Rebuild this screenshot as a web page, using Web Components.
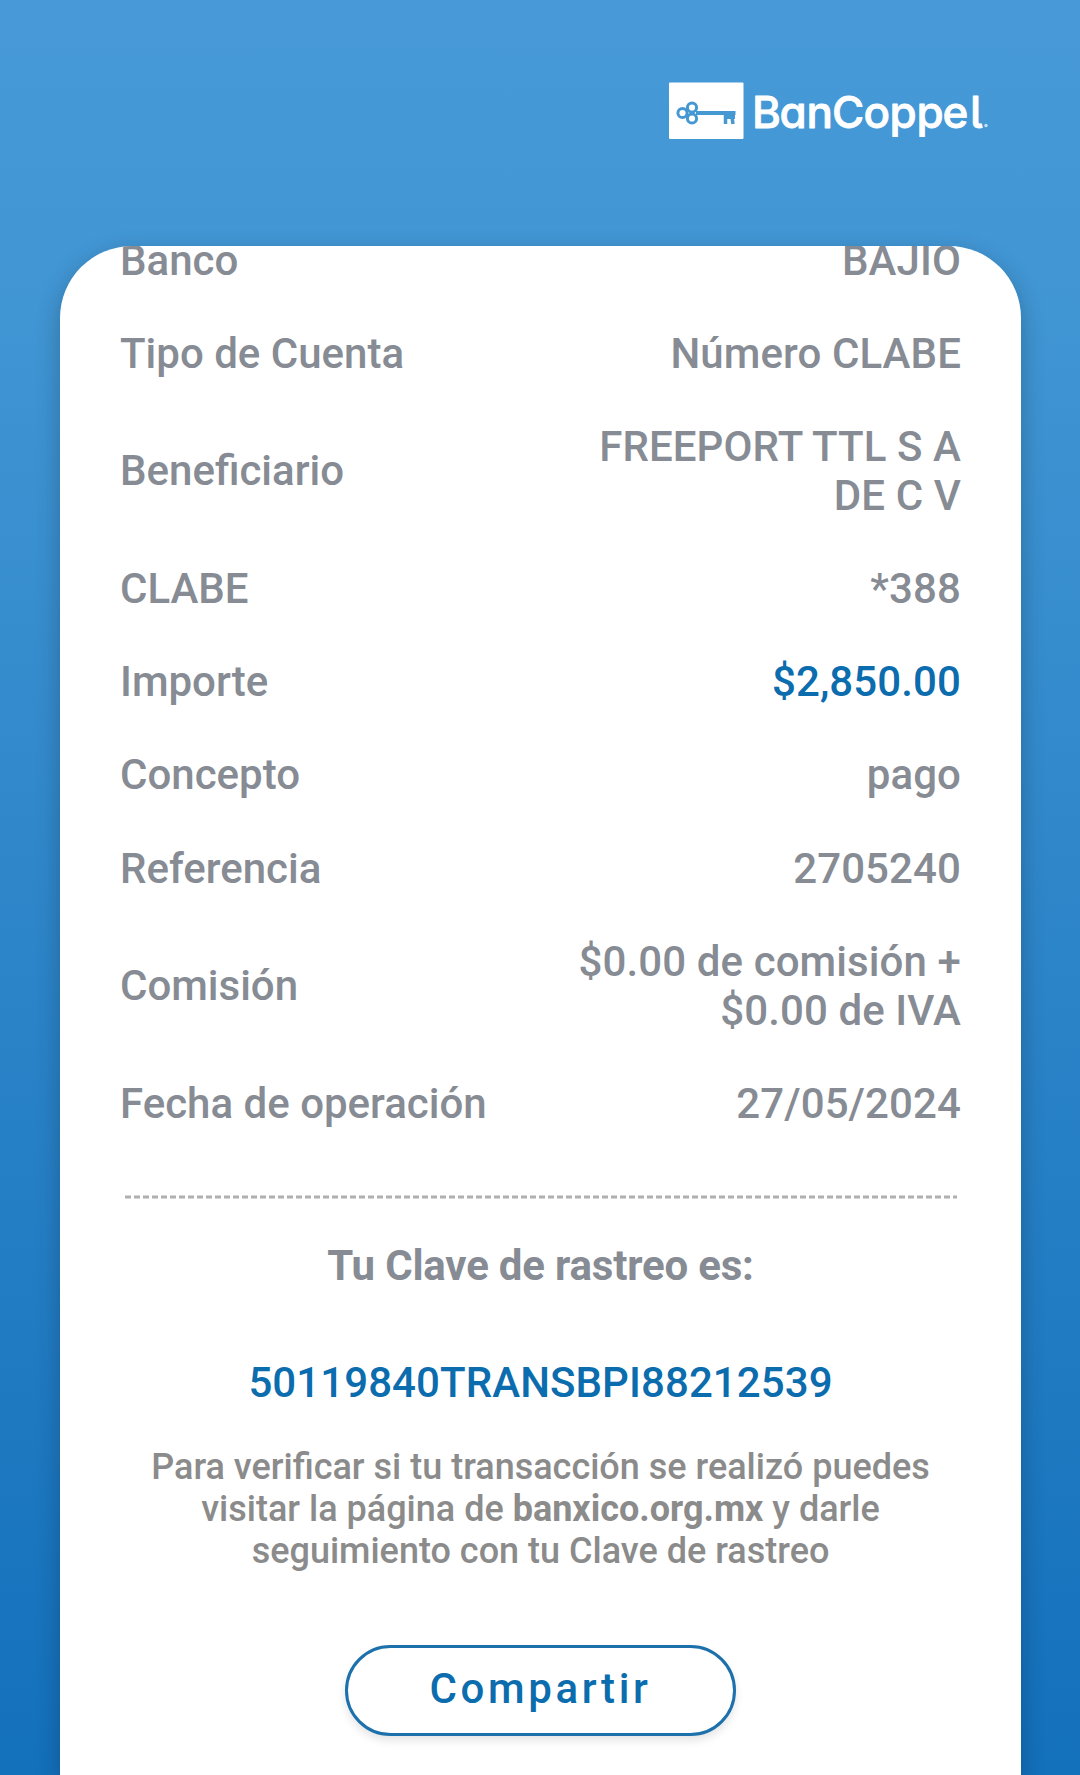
<!DOCTYPE html>
<html lang="es">
<head>
<meta charset="utf-8">
<title>BanCoppel</title>
<style>
  body {
    margin: 0;
    background: #fff;
    font-family: Roboto, "Liberation Sans", sans-serif;
  }
</style>
</head>
<body>
<transfer-receipt></transfer-receipt>

<script>
class BankLogo extends HTMLElement {
  constructor() {
    super();
    this.attachShadow({ mode: "open" });
  }

  static get styles() {
    return /* css */`
      :host {
        display: block;
        width: 322px;
        height: 68px;
      }

      svg {
        display: block;
        overflow: visible;
      }

      text {
        font-family: Inter, Lato, sans-serif;
        font-size: 44px;
        font-weight: 500;
        font-feature-settings: "cv11", "cv05";
        fill: #fff;
        stroke: #fff;
        stroke-width: .8;
        stroke-linejoin: round;
      }
    `;
  }

  connectedCallback() {
    this.shadowRoot.innerHTML = /* html */`
    <style>${BankLogo.styles}</style>
    <svg width="322" height="68" viewBox="0 0 322 68">
      <rect x="0" y="6.5" width="74.5" height="56.5" rx="1" fill="#fff"/>
      <g fill="none" stroke="#4698d3" stroke-width="3">
        <circle cx="13.5" cy="37" r="4.6"/>
        <circle cx="23" cy="31.5" r="4.6"/>
        <circle cx="23" cy="42.5" r="4.6"/>
        <path d="M27 37H66.5" stroke-width="4"/>
        <path d="M56.5 38V48M62.5 38L64 48" stroke-width="3.5"/>
        <path d="M55 41H66" stroke-width="4"/>
      </g>
      <text x="83 110.5 137.5 163 194.5 220.5 247.5 273.5 301" y="51.5">BanCoppel</text>
      <circle cx="317" cy="49.5" r="1.7" fill="#c5e3f7"/>
    </svg>
    `;
  }
}

class ReceiptRow extends HTMLElement {
  constructor() {
    super();
    this.attachShadow({ mode: "open" });
  }

  static get styles() {
    return /* css */`
      :host {
        display: flex;
        justify-content: space-between;
        align-items: center;
        padding: 21.98px 0;
        font-size: 42px;
        font-weight: 500;
        line-height: 49.2px;
        color: #868b94;
      }

      .value {
        max-width: 400px;
        letter-spacing: .1px;
        text-align: right;
      }

      :host([highlight]) .value {
        color: #0b6cae;
      }
    `;
  }

  connectedCallback() {
    this.shadowRoot.innerHTML = /* html */`
    <style>${ReceiptRow.styles}</style>
    <span class="label">${this.getAttribute("label")}</span>
    <span class="value"><slot></slot></span>
    `;
  }
}

class TrackingKey extends HTMLElement {
  constructor() {
    super();
    this.attachShadow({ mode: "open" });
  }

  static get styles() {
    return /* css */`
      :host {
        display: flex;
        flex-direction: column;
        align-items: center;
        text-align: center;
        font-weight: 500;
      }

      svg {
        display: block;
        width: 832px;
        height: 4px;
      }

      h2 {
        margin: 42px 0 0;
        font-size: 42px;
        line-height: 49px;
        font-weight: 700;
        letter-spacing: -.2px;
        color: #868b94;
      }

      .key {
        margin-top: 68px;
        font-size: 42px;
        line-height: 49px;
        letter-spacing: .08px;
        color: #0b6cae;
      }

      p {
        margin: 38.4px 0 0;
        font-size: 36px;
        line-height: 42.2px;
        color: #8b8b8b;
      }
    `;
  }

  connectedCallback() {
    this.shadowRoot.innerHTML = /* html */`
    <style>${TrackingKey.styles}</style>
    <svg viewBox="0 0 832 4">
      <path d="M0 2H832" stroke="#b0b0b0" stroke-width="3" stroke-dasharray="6 3"/>
    </svg>
    <h2>Tu Clave de rastreo es:</h2>
    <div class="key">${this.getAttribute("value")}</div>
    <p><slot></slot></p>
    `;
  }
}

class PillButton extends HTMLElement {
  constructor() {
    super();
    this.attachShadow({ mode: "open" });
  }

  static get styles() {
    return /* css */`
      :host {
        display: block;
      }

      button {
        display: block;
        box-sizing: border-box;
        width: 391px;
        height: 91px;
        padding: 0 0 3px;
        border: 3px solid #1c70ab;
        border-radius: 46px;
        background: #fff;
        box-shadow: 0 5px 9px rgba(0, 0, 0, .1);
        color: #0b6cae;
        font: 500 42px Roboto, sans-serif;
        letter-spacing: 3.6px;
      }
    `;
  }

  connectedCallback() {
    this.shadowRoot.innerHTML = /* html */`
    <style>${PillButton.styles}</style>
    <button type="button"><slot></slot></button>
    `;
  }
}

class TransferReceipt extends HTMLElement {
  constructor() {
    super();
    this.attachShadow({ mode: "open" });
  }

  static get styles() {
    return /* css */`
      :host {
        display: flex;
        flex-direction: column;
        box-sizing: border-box;
        width: 1080px;
        height: 1775px;
        overflow: hidden;
        background: linear-gradient(#479ad7, #4095d3 18%, #1370bb);
      }

      header {
        display: flex;
        justify-content: flex-end;
        flex: none;
        box-sizing: border-box;
        height: 245.5px;
        padding: 76px 89px 0 0;
      }

      main {
        display: flex;
        flex-direction: column;
        flex: 1;
        min-height: 0;
        box-sizing: border-box;
        width: 961px;
        margin-left: 60px;
        padding: 0 60px;
        overflow: hidden;
        border-radius: 72px 72px 0 0;
        background: #fff;
        box-shadow: 0 8px 24px rgba(0, 0, 0, .24);
      }

      /* the list is scrolled, so its first row starts above the card */
      .rows {
        margin-top: -31.9px;
      }

      tracking-key {
        margin-top: 45px;
      }

      pill-button {
        align-self: center;
        margin-top: 72.6px;
      }
    `;
  }

  connectedCallback() {
    this.shadowRoot.innerHTML = /* html */`
    <style>${TransferReceipt.styles}</style>
    <header><bank-logo></bank-logo></header>
    <main>
      <div class="rows">
        <receipt-row label="Banco">BAJIO</receipt-row>
        <receipt-row label="Tipo de Cuenta">Número CLABE</receipt-row>
        <receipt-row label="Beneficiario">FREEPORT TTL S A<br>DE C V</receipt-row>
        <receipt-row label="CLABE">*388</receipt-row>
        <receipt-row label="Importe" highlight>$2,850.00</receipt-row>
        <receipt-row label="Concepto">pago</receipt-row>
        <receipt-row label="Referencia">2705240</receipt-row>
        <receipt-row label="Comisión">$0.00 de comisión +<br>$0.00 de IVA</receipt-row>
        <receipt-row label="Fecha de operación">27/05/2024</receipt-row>
      </div>
      <tracking-key value="50119840TRANSBPI88212539">
        Para verificar si tu transacción se realizó puedes<br>
        visitar la página de <b>banxico.org.mx</b> y darle<br>
        seguimiento con tu Clave de rastreo
      </tracking-key>
      <pill-button>Compartir</pill-button>
    </main>
    `;
  }
}

customElements.define("bank-logo", BankLogo);
customElements.define("receipt-row", ReceiptRow);
customElements.define("tracking-key", TrackingKey);
customElements.define("pill-button", PillButton);
customElements.define("transfer-receipt", TransferReceipt);
</script>
</body>
</html>
